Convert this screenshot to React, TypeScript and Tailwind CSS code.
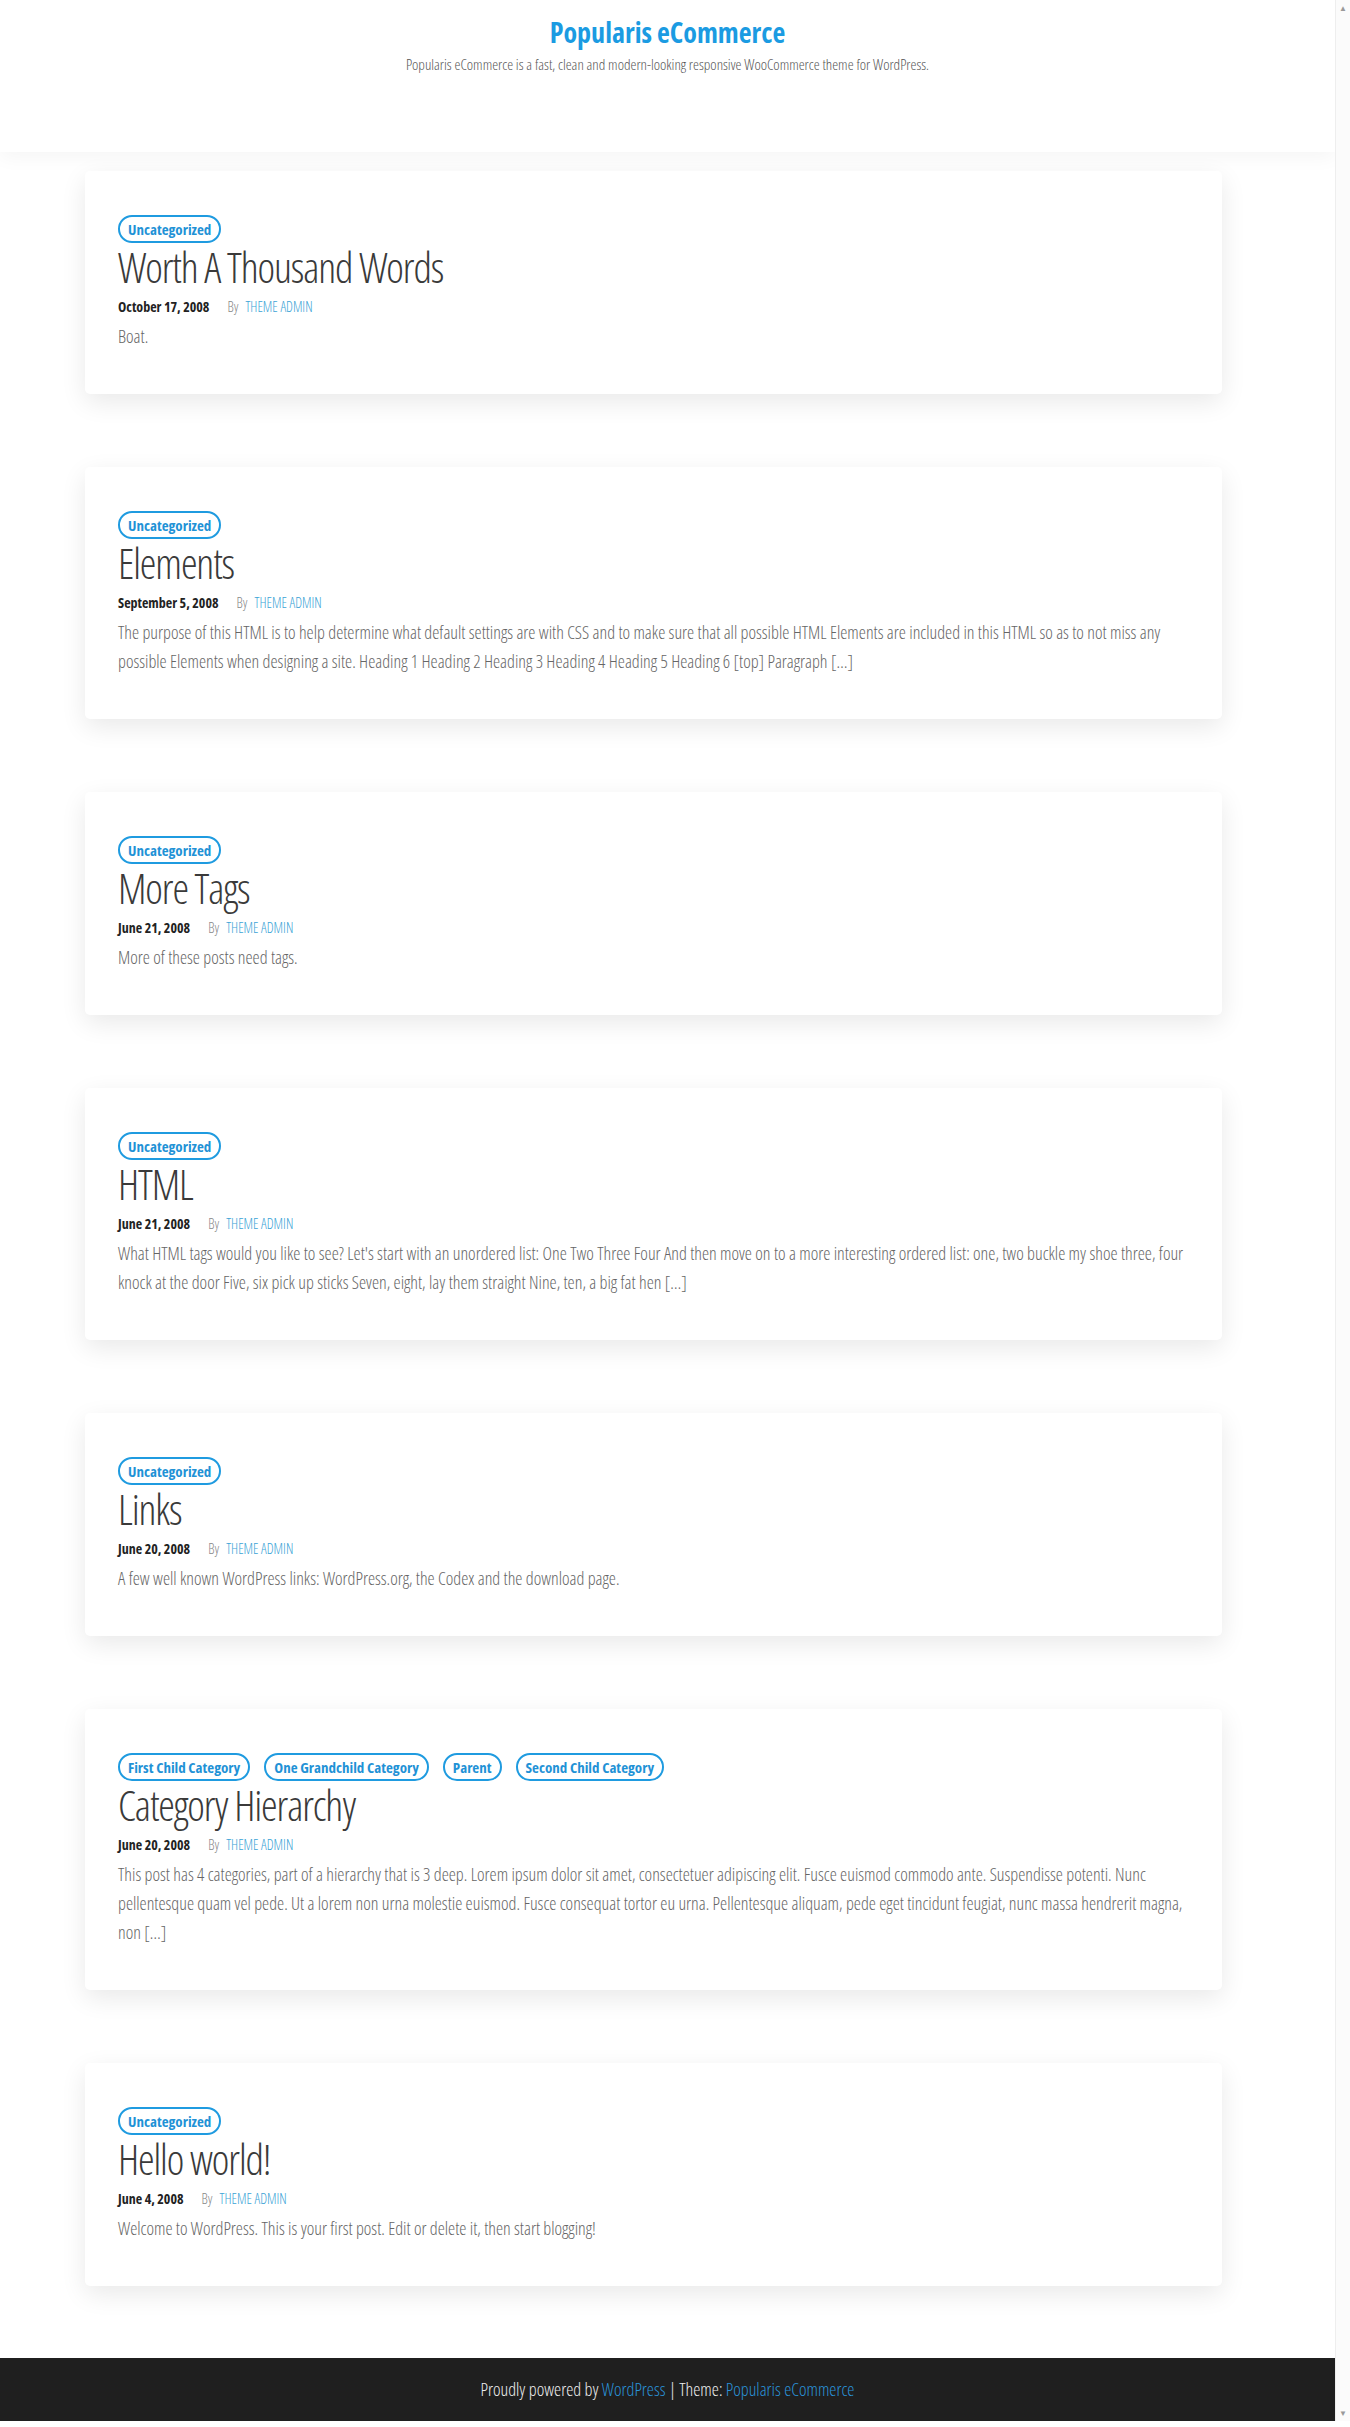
import React from 'react';

type Post = {
  cats: string[];
  title: string;
  date: string;
  excerpt: string;
};

const posts: Post[] = [
  {
    cats: ['Uncategorized'],
    title: 'Worth A Thousand Words',
    date: 'October 17, 2008',
    excerpt: 'Boat.',
  },
  {
    cats: ['Uncategorized'],
    title: 'Elements',
    date: 'September 5, 2008',
    excerpt:
      'The purpose of this HTML is to help determine what default settings are with CSS and to make sure that all possible HTML Elements are included in this HTML so as to not miss any possible Elements when designing a site. Heading 1 Heading 2 Heading 3 Heading 4 Heading 5 Heading 6 [top] Paragraph […]',
  },
  {
    cats: ['Uncategorized'],
    title: 'More Tags',
    date: 'June 21, 2008',
    excerpt: 'More of these posts need tags.',
  },
  {
    cats: ['Uncategorized'],
    title: 'HTML',
    date: 'June 21, 2008',
    excerpt:
      "What HTML tags would you like to see? Let's start with an unordered list: One Two Three Four And then move on to a more interesting ordered list: one, two buckle my shoe three, four knock at the door Five, six pick up sticks Seven, eight, lay them straight Nine, ten, a big fat hen […]",
  },
  {
    cats: ['Uncategorized'],
    title: 'Links',
    date: 'June 20, 2008',
    excerpt: 'A few well known WordPress links: WordPress.org, the Codex and the download page.',
  },
  {
    cats: ['First Child Category', 'One Grandchild Category', 'Parent', 'Second Child Category'],
    title: 'Category Hierarchy',
    date: 'June 20, 2008',
    excerpt:
      'This post has 4 categories, part of a hierarchy that is 3 deep. Lorem ipsum dolor sit amet, consectetuer adipiscing elit. Fusce euismod commodo ante. Suspendisse potenti. Nunc pellentesque quam vel pede. Ut a lorem non urna molestie euismod. Fusce consequat tortor eu urna. Pellentesque aliquam, pede eget tincidunt feugiat, nunc massa hendrerit magna, non […]',
  },
  {
    cats: ['Uncategorized'],
    title: 'Hello world!',
    date: 'June 4, 2008',
    excerpt: 'Welcome to WordPress. This is your first post. Edit or delete it, then start blogging!',
  },
];

function Card({ post }: { post: Post }) {
  return (
    <article className="w-[1137px] ml-[85px] bg-white rounded-[5px] shadow-[0_8px_26px_rgba(0,0,0,0.09)] pt-[44px] pb-[43px] px-[33px]">
      <div className="flex gap-[14px]">
        {post.cats.map((c) => (
          <span
            key={c}
            className="h-[28px] px-[8px] flex items-center rounded-full border-2 border-[#1f9be0] text-[#1f92d6] text-[15px] font-bold font-stretch-condensed"
          >
            {c}
          </span>
        ))}
      </div>
      <h2 className="mt-[1px] text-[42px] leading-[46px] tracking-[-1.1px] font-light font-stretch-condensed text-[#3a3a3a]">
        {post.title}
      </h2>
      <div className="mt-[7px] flex items-baseline text-[14px] leading-[20px] font-stretch-condensed">
        <span className="font-bold text-[#222]">{post.date}</span>
        <span className="ml-[18px] font-light text-[#888]">By</span>
        <span className="ml-[7px] font-light text-[#3ba3d6]">THEME ADMIN</span>
      </div>
      <p className="mt-[5px] text-[18px] leading-[29px] font-light font-stretch-condensed text-[#666]">
        {post.excerpt}
      </p>
    </article>
  );
}

export default function App() {
  return (
    <div className="flex w-full bg-white" style={{ fontFamily: "'Open Sans', 'Noto Sans', sans-serif" }}>
      <div className="flex-1 flex flex-col">
        <header className="h-[152px] bg-white shadow-[0_6px_18px_rgba(0,0,0,0.04)] flex flex-col items-center pt-[14px]">
          <h1 className="text-[28px] leading-[36px] font-bold font-stretch-condensed text-[#1b9be2]">
            Popularis eCommerce
          </h1>
          <p className="mt-[4px] text-[15px] leading-[20px] font-light font-stretch-condensed text-[#555]">
            Popularis eCommerce is a fast, clean and modern-looking responsive WooCommerce theme for WordPress.
          </p>
        </header>
        <main className="pt-[19px] pb-[72px] flex flex-col gap-[73px]">
          {posts.map((p) => (
            <Card key={p.title} post={p} />
          ))}
        </main>
        <footer className="h-[63px] bg-[#1f1f1f] flex items-center justify-center text-[18px] font-light font-stretch-condensed text-[#eee]">
          <span>
            Proudly powered by <span className="text-[#2a92d8]">WordPress</span> | Theme:{' '}
            <span className="text-[#2a92d8]">Popularis eCommerce</span>
          </span>
        </footer>
      </div>
      <aside className="w-[15px] flex flex-col justify-between items-center bg-[#fbfbfb] border-l border-[#eee] text-[#999] text-[8px] leading-[12px] py-[2px]">
        <span>▲</span>
        <span>▼</span>
      </aside>
    </div>
  );
}
